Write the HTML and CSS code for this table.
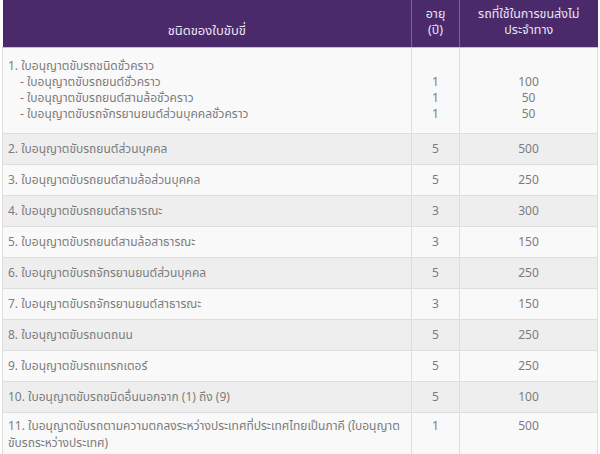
FILE: index.html
```html
<!DOCTYPE html>
<html lang="th">
<head>
<meta charset="utf-8">
<link rel="stylesheet" href="styles.css">
</head>
<body>
<table class="lic">
  <colgroup>
    <col class="c-type">
    <col class="c-age">
    <col class="c-fee">
  </colgroup>
  <thead>
    <tr>
      <th class="h-type">ชนิดของใบขับขี่</th>
      <th>อายุ<br>(ปี)</th>
      <th>รถที่ใช้ในการขนส่งไม่<br>ประจำทาง</th>
    </tr>
  </thead>
  <tbody>
    <tr class="first">
      <td>1. ใบอนุญาตขับรถชนิดชั่วคราว<br><span class="sub">- ใบอนุญาตขับรถยนต์ชั่วคราว</span><br><span class="sub">- ใบอนุญาตขับรถยนต์สามล้อชั่วคราว</span><br><span class="sub">- ใบอนุญาตขับรถจักรยานยนต์ส่วนบุคคลชั่วคราว</span></td>
      <td class="num"><br>1<br>1<br>1</td>
      <td class="num"><br>100<br>50<br>50</td>
    </tr>
    <tr><td>2. ใบอนุญาตขับรถยนต์ส่วนบุคคล</td><td class="num">5</td><td class="num">500</td></tr>
    <tr><td>3. ใบอนุญาตขับรถยนต์สามล้อส่วนบุคคล</td><td class="num">5</td><td class="num">250</td></tr>
    <tr><td>4. ใบอนุญาตขับรถยนต์สาธารณะ</td><td class="num">3</td><td class="num">300</td></tr>
    <tr><td>5. ใบอนุญาตขับรถยนต์สามล้อสาธารณะ</td><td class="num">3</td><td class="num">150</td></tr>
    <tr><td>6. ใบอนุญาตขับรถจักรยานยนต์ส่วนบุคคล</td><td class="num">5</td><td class="num">250</td></tr>
    <tr><td>7. ใบอนุญาตขับรถจักรยานยนต์สาธารณะ</td><td class="num">3</td><td class="num">150</td></tr>
    <tr><td>8. ใบอนุญาตขับรถบดถนน</td><td class="num">5</td><td class="num">250</td></tr>
    <tr><td>9. ใบอนุญาตขับรถแทรกเตอร์</td><td class="num">5</td><td class="num">250</td></tr>
    <tr><td>10. ใบอนุญาตขับรถชนิดอื่นนอกจาก (1) ถึง (9)</td><td class="num">5</td><td class="num">100</td></tr>
    <tr class="last"><td>11. ใบอนุญาตขับรถตามความตกลงระหว่างประเทศที่ประเทศไทยเป็นภาคี (ใบอนุญาตขับรถระหว่างประเทศ)</td><td class="num top">1</td><td class="num top">500</td></tr>
  </tbody>
</table>
</body>
</html>
```
FILE: styles.css
```css
html, body {
  margin: 0;
  padding: 0;
  background: #ffffff;
}
body {
  padding-left: 2px;
  font-family: "Noto Sans Thai", "Noto Sans", "Liberation Sans", sans-serif;
}
.lic {
  border-collapse: collapse;
  width: 595px;
  table-layout: fixed;
  font-size: 12px;
  color: #7c7c7c;
}
.c-type { width: 409px; }
.c-age { width: 48px; }
.c-fee { width: 138px; }
.lic th {
  background: #4a2a6a;
  color: #ece4f4;
  font-weight: normal;
  font-size: 12.5px;
  line-height: 16px;
  height: 47px;
  padding: 0 4px;
  box-sizing: border-box;
  text-align: center;
  vertical-align: middle;
  border-left: 1px solid #7a6496;
  border-bottom: 1px solid #c9bcd8;
}
.lic th:first-child { border-left: none; }
.lic th.h-type {
  vertical-align: bottom;
  padding-bottom: 8px;
  font-size: 13px;
}
.lic td {
  border: 1px solid #dedede;
  padding: 0 5px;
  height: 30px;
  line-height: 16px;
  vertical-align: middle;
}
.lic tbody tr:nth-child(odd) td { background: #f9f9f9; }
.lic tbody tr:nth-child(even) td { background: #eeeeee; }
.lic td.num { text-align: center; }
.lic tr.first td {
  padding-top: 10px;
  padding-bottom: 11px;
  vertical-align: top;
}
.sub { padding-left: 12px; }
.lic tr.last td {
  padding-top: 5px;
  padding-bottom: 15px;
  vertical-align: top;
  line-height: 17px;
}
```
